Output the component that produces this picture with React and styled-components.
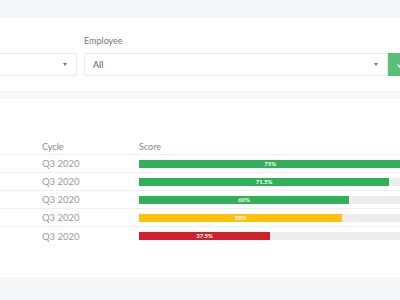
import React from "react";
import styled, { createGlobalStyle } from "styled-components";

const Global = createGlobalStyle`
  html, body { margin: 0; padding: 0; background: #f5f6f8; overflow: hidden; }
  body { font-family: Lato, "Open Sans", sans-serif; }
`;

const Page = styled.div`
  margin-left: -120px;
  width: 625px;
  padding-top: 18px;
  display: flex;
  flex-direction: column;
  gap: 8px;
`;

const Card = styled.div`
  background: #fff;
  padding: ${(p) => p.$pad};
`;

const Filters = styled.div`
  display: flex;
  gap: 7px;
`;

const Field = styled.div`
  display: flex;
  flex-direction: column;
  flex: 0 0 ${(p) => p.$w}px;
`;

const Label = styled.div`
  font-size: 9px;
  line-height: 12px;
  color: #777;
  height: 12px;
  margin-bottom: 6px;
`;

const InputGroup = styled.div`
  display: flex;
`;

const Select = styled.div`
  flex: 1;
  height: 23px;
  box-sizing: border-box;
  border: 1px solid #e9e9e9;
  border-radius: 2px;
  display: flex;
  align-items: center;
  justify-content: space-between;
  padding: 0 9px 0 8px;
  font-size: 9px;
  color: #555;
`;

const Caret = styled.span`
  width: 0;
  height: 0;
  border-left: 2.5px solid transparent;
  border-right: 2.5px solid transparent;
  border-top: 3px solid #777;
`;

const GoButton = styled.div`
  flex: 0 0 101px;
  height: 23px;
  background: #5cbf79;
  border-radius: 0 2px 2px 0;
  display: flex;
  align-items: center;
  padding-left: 8px;
  box-sizing: border-box;
`;

const Table = styled.div`
  display: grid;
  grid-template-columns: 146px 97px 350px;
`;

const Row = styled.div`
  display: contents;
`;

const Cell = styled.div`
  height: ${(p) => (p.$head ? 17 : 18)}px;
  box-sizing: border-box;
  border-bottom: ${(p) => (p.$last ? "none" : "1px solid #efefef")};
  display: flex;
  align-items: center;
  font-size: ${(p) => (p.$head ? 9 : 9.5)}px;
  color: ${(p) => (p.$head ? "#888" : "#9a9a9a")};
`;

const Track = styled.div`
  width: 100%;
  height: 8px;
  background: #ededee;
  display: flex;
`;

const Fill = styled.div`
  height: 100%;
  background: ${(p) => p.$color};
  color: #fff;
  font-size: 6px;
  font-weight: 700;
  display: flex;
  align-items: center;
  justify-content: center;
  line-height: 8px;
`;

const rows = [
  { score: 75, color: "#30b058" },
  { score: 71.5, color: "#30b058" },
  { score: 60, color: "#30b058" },
  { score: 58, color: "#ffc10a" },
  { score: 37.5, color: "#d0202c" },
];

export default function App() {
  return (
    <>
      <Global />
      <Page>
        <Card $pad="17px 16px 15px">
          <Filters>
            <Field $w={181}>
              <Label>Cycle</Label>
              <Select>
                <span>Annual</span>
                <Caret />
              </Select>
            </Field>
            <Field $w={405}>
              <Label>Employee</Label>
              <InputGroup>
                <Select>
                  <span>All</span>
                  <Caret />
                </Select>
                <GoButton>
                  <svg width="12" height="12" viewBox="0 0 24 24" fill="none" stroke="#fff" strokeWidth="2.5" strokeLinecap="round" strokeLinejoin="round">
                    <path d="M4 12l5 5L20 6" />
                  </svg>
                </GoButton>
              </InputGroup>
            </Field>
          </Filters>
        </Card>
        <Card $pad="39px 16px 32px">
          <Table>
            <Row>
              <Cell $head>Name</Cell>
              <Cell $head>Cycle</Cell>
              <Cell $head>Score</Cell>
            </Row>
            {rows.map((r, i) => {
              const last = i === rows.length - 1;
              return (
                <Row key={i}>
                  <Cell $last={last}>Employee</Cell>
                  <Cell $last={last}>Q3 2020</Cell>
                  <Cell $last={last}>
                    <Track>
                      <Fill $color={r.color} style={{ width: `${r.score}%` }}>
                        {r.score}%
                      </Fill>
                    </Track>
                  </Cell>
                </Row>
              );
            })}
          </Table>
        </Card>
      </Page>
    </>
  );
}
